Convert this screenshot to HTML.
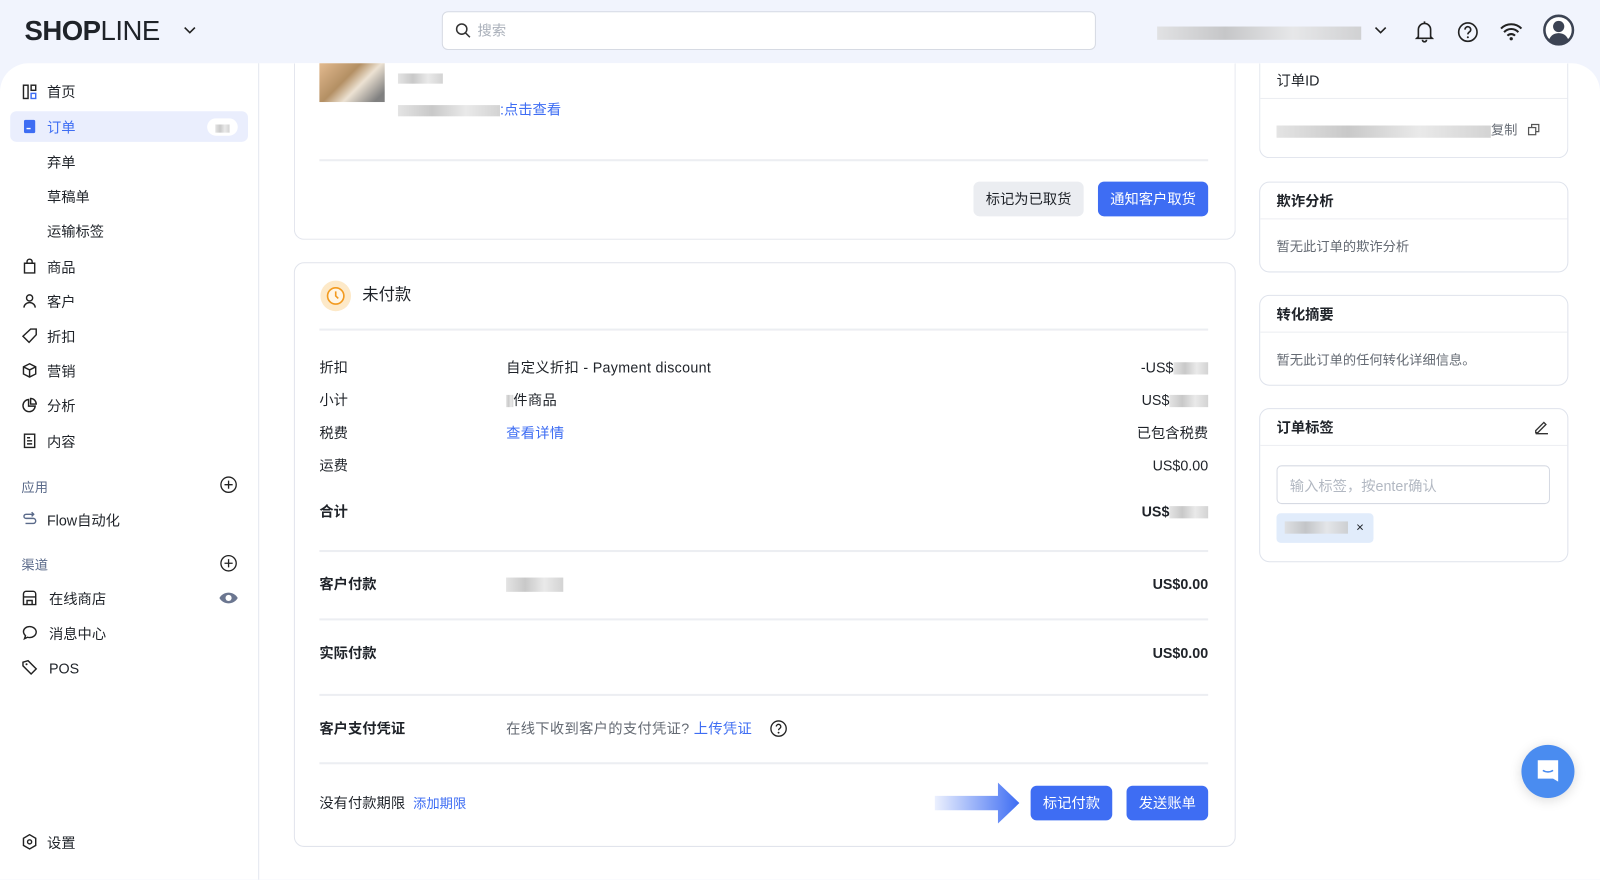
<!DOCTYPE html>
<html><head><meta charset="utf-8"><style>
*{box-sizing:border-box;margin:0;padding:0}
html,body{width:1600px;height:866px;overflow:hidden;background:#f1f4fd}
body{font-family:"Liberation Sans","Noto Sans CJK SC",sans-serif;color:#1f2329}
#w{position:absolute;left:0;top:0;width:1568px;height:849px;transform:scale(1.020408);transform-origin:0 0;background:#f1f4fd}
.a{position:absolute}
.main{position:absolute;left:0;top:62px;width:1568px;height:800px;background:#fff;border-radius:28px 28px 0 0}
.side{position:absolute;left:0;top:62px;width:254px;height:800px;border-right:1.5px solid #e4e7ef}
.nav{position:absolute;left:46px;font-size:14px;color:#1f2329;line-height:18px}
.ic{position:absolute;left:21px;width:16px;height:16px}
.card{position:absolute;border:1.5px solid #e1e4ec;border-radius:10px;background:#fff}
.t14{font-size:14px;line-height:18px}
.lbl{position:absolute;left:313px;font-size:14px;line-height:18px}
.mid{position:absolute;left:496px;font-size:14px;line-height:18px;letter-spacing:.3px}
.r{position:absolute;right:384px;font-size:14px;line-height:18px;text-align:right}
.hr{position:absolute;left:313px;width:871px;height:1.5px;background:#eceef2}
.btn{position:absolute;height:34px;border-radius:6px;font-size:14px;line-height:34px;text-align:center}
.blue{background:#3e6df3;color:#fff}
.blur{display:inline-block;background:linear-gradient(90deg,#ddd,#bbb,#e4e4e4,#c8c8c8);height:12px;vertical-align:middle;opacity:.8}
.rc{position:absolute;left:1234px;width:303px;border:1.5px solid #dfe3ec;border-radius:10px;background:#fff}
.rh{height:36px;border-bottom:1.5px solid #eceef2;padding:9px 16px;font-size:14px;font-weight:bold;line-height:18px}
.rb{padding:0 16px;font-size:13px;color:#646a73}
</style></head><body><div id="w">
<!-- header -->
<div class="a" style="left:24px;top:15px;font-size:27px;font-weight:bold;letter-spacing:-0.5px;color:#1f2329">SHOP<span style="font-weight:normal">LINE</span></div>
<svg class="a" style="left:180px;top:25px" width="12" height="10" viewBox="0 0 12 10"><path d="M1 2l5 5 5-5" fill="none" stroke="#222" stroke-width="1.6"/></svg>
<div class="a" style="left:433px;top:11px;width:641px;height:38px;background:#fff;border:1.5px solid #d6dae3;border-radius:6px"></div>
<svg class="a" style="left:446px;top:22px" width="16" height="16" viewBox="0 0 16 16"><circle cx="6.5" cy="6.5" r="5" fill="none" stroke="#333" stroke-width="1.5"/><path d="M10 10l4.5 4.5" stroke="#333" stroke-width="1.5"/></svg>
<div class="a" style="left:468px;top:20px;font-size:14px;color:#aab0ba">搜索</div>
<div class="a" style="left:1134px;top:24px"><span class="blur" style="width:200px;height:13px"></span></div>
<svg class="a" style="left:1346px;top:25px" width="14" height="10" viewBox="0 0 14 10"><path d="M2 2l5 5 5-5" fill="none" stroke="#222" stroke-width="1.6"/></svg>
<svg class="a" style="left:1386px;top:20px" width="20" height="22" viewBox="0 0 20 22"><path d="M4 16V9a6 6 0 0112 0v7l1.5 1.5h-15zM8 19a2 2 0 004 0M10 1v2" fill="none" stroke="#222" stroke-width="1.6"/></svg>
<svg class="a" style="left:1428px;top:21px" width="21" height="21" viewBox="0 0 21 21"><circle cx="10.5" cy="10.5" r="9" fill="none" stroke="#222" stroke-width="1.6"/><path d="M7.7 8a2.8 2.8 0 115 1.7c-1.2 1-2.2 1.4-2.2 3" fill="none" stroke="#222" stroke-width="1.6"/><circle cx="10.5" cy="15.5" r="1" fill="#222"/></svg>
<svg class="a" style="left:1470px;top:22px" width="22" height="18" viewBox="0 0 22 18"><path d="M1 6a14 14 0 0120 0M4 9.5a9.5 9.5 0 0114 0M7.3 13a5 5 0 017.4 0" fill="none" stroke="#222" stroke-width="2"/><circle cx="11" cy="16" r="1.6" fill="#222"/></svg>
<svg class="a" style="left:1512px;top:14px" width="31" height="31" viewBox="0 0 31 31"><circle cx="15.5" cy="15.5" r="14" fill="#fff" stroke="#3c4353" stroke-width="2.5"/><circle cx="15.5" cy="12" r="5.5" fill="#3c4353"/><path d="M6 25c2-5 6-6.5 9.5-6.5S23 20 25 25a13 13 0 01-19 0z" fill="#3c4353"/></svg>
<div class="main"></div>
<div class="side"></div>
<!-- sidebar -->
<svg class="ic" style="top:82px" viewBox="0 0 16 16"><rect x="2" y="1.5" width="4.5" height="13" fill="none" stroke="#222" stroke-width="1.4"/><rect x="9.5" y="1.5" width="4.5" height="5" fill="none" stroke="#222" stroke-width="1.4"/><rect x="9.5" y="9.5" width="4.5" height="5" fill="none" stroke="#3e6df3" stroke-width="1.4"/></svg>
<div class="nav" style="top:81px">首页</div>
<div class="a" style="left:10px;top:109px;width:233px;height:30px;background:#eaeefd;border-radius:6px"></div>
<svg class="ic" style="top:116px" viewBox="0 0 16 16"><rect x="2.5" y="1.5" width="11" height="13" rx="1.5" fill="#3e6df3"/><path d="M5 10h4" stroke="#fff" stroke-width="1.4"/></svg>
<div class="nav" style="top:116px;color:#3e6df3">订单</div>
<div class="a" style="left:203px;top:116px;width:30px;height:17px;border-radius:9px;background:#fff"><span class="blur" style="margin:3px 0 0 8px;width:14px;height:8px"></span></div>
<div class="nav" style="top:150px">弃单</div>
<div class="nav" style="top:184px">草稿单</div>
<div class="nav" style="top:218px">运输标签</div>
<svg class="ic" style="top:253px" viewBox="0 0 16 16"><path d="M3 5h10v9.5H3zM5.5 5V3.5a2.5 2.5 0 015 0V5" fill="none" stroke="#222" stroke-width="1.4"/></svg><div class="nav" style="top:253px">商品</div>
<svg class="ic" style="top:287px" viewBox="0 0 16 16"><circle cx="8" cy="5" r="3" fill="none" stroke="#222" stroke-width="1.4"/><path d="M2.5 14.5a5.5 5 0 0111 0" fill="none" stroke="#222" stroke-width="1.4"/></svg><div class="nav" style="top:287px">客户</div>
<svg class="ic" style="top:321px" viewBox="0 0 16 16"><path d="M9 1.5h5.5V7l-7 7.5L1.5 8.5z" fill="none" stroke="#222" stroke-width="1.4"/></svg><div class="nav" style="top:321px">折扣</div>
<svg class="ic" style="top:355px" viewBox="0 0 16 16"><path d="M8 1.5l6 3v7l-6 3-6-3v-7zM2 4.5l6 3 6-3M8 7.5v7" fill="none" stroke="#222" stroke-width="1.4"/></svg><div class="nav" style="top:355px">营销</div>
<svg class="ic" style="top:389px" viewBox="0 0 16 16"><path d="M7 2.5a6 6 0 106.5 6.5H7z" fill="none" stroke="#222" stroke-width="1.4"/><path d="M9 1.5a5.5 5.5 0 015.5 5.5H9z" fill="none" stroke="#222" stroke-width="1.4"/></svg><div class="nav" style="top:389px">分析</div>
<svg class="ic" style="top:424px" viewBox="0 0 16 16"><path d="M3 1.5h10v13H3zM5.5 5h3M5.5 8h5M5.5 11h5" fill="none" stroke="#222" stroke-width="1.4"/></svg><div class="nav" style="top:424px">内容</div>
<div class="a" style="left:21px;top:467px;font-size:13px;color:#5a6a8a">应用</div>
<svg class="a" style="left:215px;top:466px" width="18" height="18" viewBox="0 0 18 18"><circle cx="9" cy="9" r="7.5" fill="none" stroke="#222" stroke-width="1.3"/><path d="M9 5v8M5 9h8" stroke="#222" stroke-width="1.3"/></svg>
<svg class="ic" style="top:501px" viewBox="0 0 16 16"><path d="M12 3H4.5a2 2 0 000 4h7a2.5 2.5 0 010 5H4M10 1l2 2-2 2" fill="none" stroke="#5a6a8a" stroke-width="1.4"/></svg><div class="nav" style="top:501px">Flow自动化</div>
<div class="a" style="left:21px;top:543px;font-size:13px;color:#5a6a8a">渠道</div>
<svg class="a" style="left:215px;top:543px" width="18" height="18" viewBox="0 0 18 18"><circle cx="9" cy="9" r="7.5" fill="none" stroke="#222" stroke-width="1.3"/><path d="M9 5v8M5 9h8" stroke="#222" stroke-width="1.3"/></svg>
<svg class="ic" style="top:578px" viewBox="0 0 16 16"><path d="M2 4a2.5 2.5 0 012.5-2.5h7A2.5 2.5 0 0114 4v10.5H2zM2 7h12M5.5 14.5v-4h5v4" fill="none" stroke="#222" stroke-width="1.4"/></svg><div class="nav" style="top:578px;left:48px">在线商店</div>
<svg class="a" style="left:214px;top:578px" width="20" height="16" viewBox="0 0 20 16"><path d="M1 8c4-7 14-7 18 0-4 7-14 7-18 0z" fill="#6b7690"/><circle cx="10" cy="8" r="3" fill="#fff"/></svg>
<svg class="ic" style="top:612px" viewBox="0 0 16 16"><path d="M8 2a6 5 0 00-6 5c0 2 1 3 2 4l-1 3 3-1.5c.6.2 1.3.3 2 .3a6 5 0 000-10.8z" fill="none" stroke="#222" stroke-width="1.4"/></svg><div class="nav" style="top:612px;left:48px">消息中心</div>
<svg class="ic" style="top:646px" viewBox="0 0 16 16"><path d="M1.5 3l5-1.5 8 8-5 5-8-8z" fill="none" stroke="#222" stroke-width="1.4"/><circle cx="5" cy="5" r="1" fill="#222"/></svg><div class="nav" style="top:646px;left:48px">POS</div>
<svg class="ic" style="top:817px" viewBox="0 0 16 16"><path d="M8 1l6 3.5v7L8 15l-6-3.5v-7z" fill="none" stroke="#222" stroke-width="1.4"/><circle cx="8" cy="8" r="2" fill="none" stroke="#222" stroke-width="1.4"/></svg><div class="nav" style="top:817px">设置</div>
<!-- card 1 -->
<div class="card" style="left:288px;top:62px;width:923px;height:173px;border-top:none;border-radius:0 0 10px 10px"></div>
<div class="a" style="left:313px;top:62px;width:64px;height:38px;background:linear-gradient(135deg,#d9a36a,#9a6a30 40%,#e6d8c4 60%,#555 90%);opacity:.75"></div>
<div class="a" style="left:390px;top:68px"><span class="blur" style="width:44px;height:10px"></span></div>
<div class="a t14" style="left:390px;top:98px"><span class="blur" style="width:100px;height:11px"></span><span style="color:#3e6df3">:点击查看</span></div>
<div class="hr" style="top:156px"></div>
<div class="btn" style="left:954px;top:178px;width:108px;background:#ebedf1;color:#1f2329">标记为已取货</div>
<div class="btn blue" style="left:1076px;top:178px;width:108px">通知客户取货</div>
<!-- card 2 -->
<div class="card" style="left:288px;top:257px;width:923px;height:573px"></div>
<div class="a" style="left:314px;top:275px;width:30px;height:30px;border-radius:50%;background:#fde9c8"></div>
<svg class="a" style="left:319px;top:280px" width="20" height="20" viewBox="0 0 20 20"><circle cx="10" cy="10" r="8" fill="#fff6e6" stroke="#f29a1f" stroke-width="1.6"/><path d="M10 5.5V10l2.5 2.5" fill="none" stroke="#f29a1f" stroke-width="1.6"/></svg>
<div class="a" style="left:355px;top:280px;font-size:16px;line-height:20px">未付款</div>
<div class="hr" style="top:322px"></div>
<div class="lbl" style="top:351px">折扣</div><div class="mid" style="top:351px">自定义折扣 - Payment discount</div><div class="r" style="top:351px">-US$<span class="blur" style="width:34px"></span></div>
<div class="lbl" style="top:383px">小计</div><div class="mid" style="top:383px"><span class="blur" style="width:7px"></span>件商品</div><div class="r" style="top:383px">US$<span class="blur" style="width:38px"></span></div>
<div class="lbl" style="top:415px">税费</div><div class="mid" style="top:415px;color:#3e6df3">查看详情</div><div class="r" style="top:415px">已包含税费</div>
<div class="lbl" style="top:447px">运费</div><div class="r" style="top:447px">US$0.00</div>
<div class="lbl" style="top:492px;font-weight:bold">合计</div><div class="r" style="top:492px;font-weight:bold">US$<span class="blur" style="width:38px"></span></div>
<div class="hr" style="top:539px"></div>
<div class="lbl" style="top:563px;font-weight:bold">客户付款</div><div class="mid" style="top:563px"><span class="blur" style="width:56px;height:14px"></span></div><div class="r" style="top:563px;font-weight:bold">US$0.00</div>
<div class="hr" style="top:606px"></div>
<div class="lbl" style="top:631px;font-weight:bold">实际付款</div><div class="r" style="top:631px;font-weight:bold">US$0.00</div>
<div class="hr" style="top:680px"></div>
<div class="lbl" style="top:705px;font-weight:bold">客户支付凭证</div><div class="mid" style="top:705px;color:#646a73">在线下收到客户的支付凭证? <span style="color:#3e6df3">上传凭证</span></div>
<svg class="a" style="left:754px;top:705px" width="18" height="18" viewBox="0 0 18 18"><circle cx="9" cy="9" r="7.5" fill="none" stroke="#222" stroke-width="1.3"/><path d="M6.8 7a2.2 2.2 0 114 1.3c-1 .8-1.8 1.1-1.8 2.4" fill="none" stroke="#222" stroke-width="1.3"/><circle cx="9" cy="13" r=".9" fill="#222"/></svg>
<div class="hr" style="top:747px"></div>
<div class="lbl" style="top:778px">没有付款期限 <span style="color:#3e6df3;font-size:13px;margin-left:4px">添加期限</span></div>
<svg class="a" style="left:916px;top:766px" width="84" height="42" viewBox="0 0 84 42"><defs><linearGradient id="g" x1="0" x2="1"><stop offset="0" stop-color="#3e6df3" stop-opacity=".1"/><stop offset="1" stop-color="#3e6df3"/></linearGradient></defs><path d="M0 14h62V1l21 20-21 20V28H0z" fill="url(#g)"/></svg>
<div class="btn blue" style="left:1010px;top:770px;width:80px">标记付款</div>
<div class="btn blue" style="left:1104px;top:770px;width:80px">发送账单</div>
<!-- right cards -->
<div class="rc" style="top:62px;height:93px;border-top:none;border-radius:0 0 10px 10px"><div class="rh" style="height:35px;font-weight:normal;font-size:14px;padding-top:8px">订单ID</div><div class="rb" style="padding-top:20px"><span class="blur" style="width:210px;height:12px"></span><span style="color:#646a73">复制</span> <svg width="12" height="12" viewBox="0 0 12 12" style="vertical-align:-1px;margin-left:6px"><rect x="1" y="4" width="7" height="7" fill="none" stroke="#555" stroke-width="1.2"/><path d="M4 4V1h7v7H8" fill="none" stroke="#555" stroke-width="1.2"/></svg></div></div>
<div class="rc" style="top:178px;height:89px"><div class="rh">欺诈分析</div><div class="rb" style="padding-top:16px">暂无此订单的欺诈分析</div></div>
<div class="rc" style="top:289px;height:89px"><div class="rh">转化摘要</div><div class="rb" style="padding-top:16px">暂无此订单的任何转化详细信息。</div></div>
<div class="rc" style="top:400px;height:151px"><div class="rh">订单标签</div></div>
<svg class="a" style="left:1503px;top:411px" width="15" height="15" viewBox="0 0 15 15"><path d="M2 11l8-8 2 2-8 8H2zM2 14h12" fill="none" stroke="#333" stroke-width="1.3"/></svg>
<div class="a" style="left:1251px;top:456px;width:268px;height:38px;border:1.5px solid #d6dae3;border-radius:5px;padding:9px 12px;font-size:14px;color:#b2b8c2">输入标签，按enter确认</div>
<div class="a" style="left:1251px;top:503px;width:95px;height:29px;background:#e1ecfb;border-radius:4px;padding:8px 0 0 8px"><span class="blur" style="width:62px;height:12px;vertical-align:top"></span><span style="font-size:13px;margin-left:8px;position:relative;top:-3px">×</span></div>
<!-- chat -->
<div class="a" style="left:1491px;top:730px;width:52px;height:52px;border-radius:50%;background:#4a8cf0;box-shadow:0 2px 12px rgba(0,0,0,.15)"></div>
<svg class="a" style="left:1503px;top:742px" width="28" height="28" viewBox="0 0 28 28"><path d="M4 3h20v21l-5-3H4z" fill="#fff"/><path d="M9 13c3 2 7 2 10 0" fill="none" stroke="#4a8cf0" stroke-width="1.5"/></svg>
</div></body></html>
